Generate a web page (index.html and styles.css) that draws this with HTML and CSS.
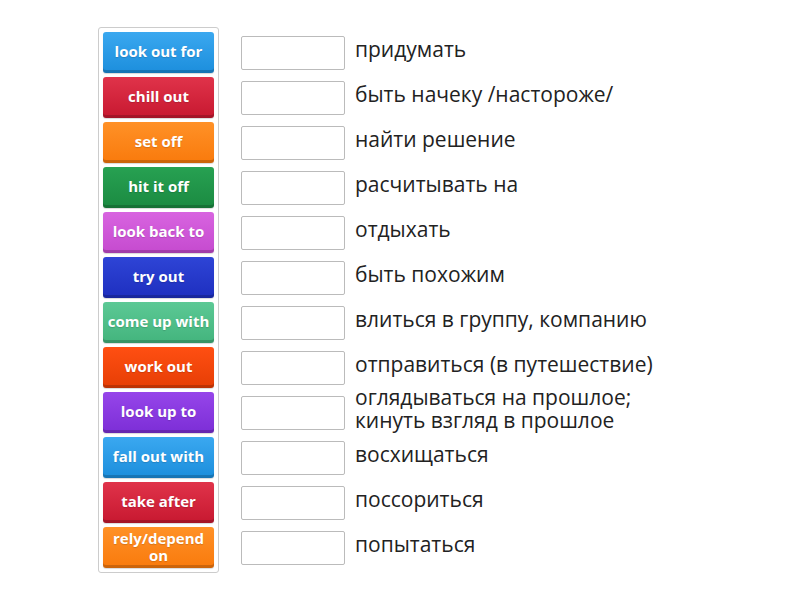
FILE: index.html
```html
<!DOCTYPE html>
<html lang="ru">
<head>
    <meta charset="UTF-8">
    <title>Match up</title>
    <link rel="stylesheet" href="styles.css">
</head>
<body>
    <div class="board">
        <div class="tile-bank">
            <div class="tile tile-blue">look out for</div>
            <div class="tile tile-red">chill out</div>
            <div class="tile tile-orange">set off</div>
            <div class="tile tile-green">hit it off</div>
            <div class="tile tile-pink">look back to</div>
            <div class="tile tile-navy">try out</div>
            <div class="tile tile-mint">come up with</div>
            <div class="tile tile-flame">work out</div>
            <div class="tile tile-violet">look up to</div>
            <div class="tile tile-blue">fall out with</div>
            <div class="tile tile-red">take after</div>
            <div class="tile tile-orange">rely/depend on</div>
        </div>

        <div class="answers">
            <div class="answer-row"><div class="drop-box"></div><span class="answer-text">придумать</span></div>
            <div class="answer-row"><div class="drop-box"></div><span class="answer-text">быть начеку /настороже/</span></div>
            <div class="answer-row"><div class="drop-box"></div><span class="answer-text">найти решение</span></div>
            <div class="answer-row"><div class="drop-box"></div><span class="answer-text">расчитывать на</span></div>
            <div class="answer-row"><div class="drop-box"></div><span class="answer-text">отдыхать</span></div>
            <div class="answer-row"><div class="drop-box"></div><span class="answer-text">быть похожим</span></div>
            <div class="answer-row"><div class="drop-box"></div><span class="answer-text">влиться в группу, компанию</span></div>
            <div class="answer-row"><div class="drop-box"></div><span class="answer-text">отправиться (в путешествие)</span></div>
            <div class="answer-row"><div class="drop-box"></div><span class="answer-text">оглядываться на прошлое;<br>кинуть взгляд в прошлое</span></div>
            <div class="answer-row"><div class="drop-box"></div><span class="answer-text">восхищаться</span></div>
            <div class="answer-row"><div class="drop-box"></div><span class="answer-text">поссориться</span></div>
            <div class="answer-row"><div class="drop-box"></div><span class="answer-text">попытаться</span></div>
        </div>
    </div>
</body>
</html>
```

FILE: styles.css
```css
* { margin: 0; padding: 0; box-sizing: border-box; }
body { font-family: 'Open Sans', 'Noto Sans', sans-serif; background: #FFFFFF; color: #222222; }

.board { display: flex; align-items: flex-start; gap: 22px; padding: 27px 0 0 98px; }

.tile-bank { width: 121px; display: flex; flex-direction: column; gap: 4px; padding: 4px; border: 1px solid #CCCCCC; border-radius: 3px; background: #FFFFFF; }
.tile { height: 41px; display: flex; align-items: center; justify-content: center; text-align: center; color: #FFFFFF; font-weight: 700; font-size: 15px; line-height: 17px; border-radius: 3px; padding-bottom: 2px; text-shadow: 0 1px 1px rgba(0, 0, 0, 0.15); box-shadow: inset 0 -3px 0 rgba(0, 0, 0, 0.18), 0 1px 1px rgba(0, 0, 0, 0.15); }

.tile-blue   { background: linear-gradient(#3AA8F0, #1C8EDC); }
.tile-red    { background: linear-gradient(#E0334A, #C71830); }
.tile-orange { background: linear-gradient(#FF9127, #F97A0C); }
.tile-green  { background: linear-gradient(#27A152, #1B8A41); }
.tile-pink   { background: linear-gradient(#D864E0, #C54ACF); }
.tile-navy   { background: linear-gradient(#2E44D6, #1E2FBF); }
.tile-mint   { background: linear-gradient(#5CC995, #43B47D); }
.tile-flame  { background: linear-gradient(#FF4F12, #E63E05); }
.tile-violet { background: linear-gradient(#9645EA, #7C2ED6); }

.answers { display: flex; flex-direction: column; gap: 4px; padding-top: 5px; }
.answer-row { height: 41px; display: flex; align-items: center; gap: 10px; }
.drop-box { width: 104px; height: 34px; flex-shrink: 0; border: 1px solid #BBBBBB; border-radius: 2px; background: #FFFFFF; }
.answer-text { font-size: 21px; line-height: 23px; color: #222222; margin-top: -7px; }
```
